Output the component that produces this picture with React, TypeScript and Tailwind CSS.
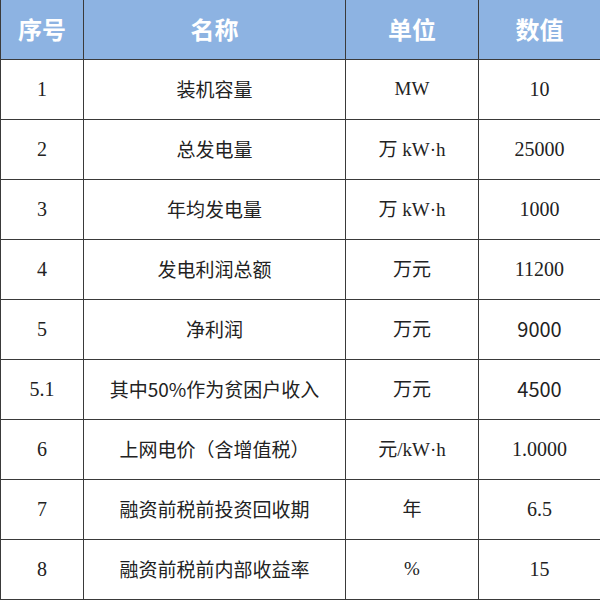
const sans = "font-['Noto_Sans_CJK_SC','Noto_Sans',sans-serif]";
const serif = "font-['Liberation_Serif','Noto_Sans_CJK_SC',serif]";

type Row = {
  no: string;
  name: string;
  unit: React.ReactNode;
  value: string;
  valueSans?: boolean;
};

const rows: Row[] = [
  { no: "1", name: "装机容量", unit: <span className={serif}>MW</span>, value: "10" },
  {
    no: "2",
    name: "总发电量",
    unit: (
      <>
        <span className={sans}>万</span> <span className={serif}>kW·h</span>
      </>
    ),
    value: "25000",
  },
  {
    no: "3",
    name: "年均发电量",
    unit: (
      <>
        <span className={sans}>万</span> <span className={serif}>kW·h</span>
      </>
    ),
    value: "1000",
  },
  { no: "4", name: "发电利润总额", unit: <span className={sans}>万元</span>, value: "11200" },
  { no: "5", name: "净利润", unit: <span className={sans}>万元</span>, value: "9000", valueSans: true },
  {
    no: "5.1",
    name: "其中50%作为贫困户收入",
    unit: <span className={sans}>万元</span>,
    value: "4500",
    valueSans: true,
  },
  {
    no: "6",
    name: "上网电价（含增值税）",
    unit: (
      <>
        <span className={sans}>元</span>
        <span className={serif}>/kW·h</span>
      </>
    ),
    value: "1.0000",
  },
  { no: "7", name: "融资前税前投资回收期", unit: <span className={sans}>年</span>, value: "6.5" },
  { no: "8", name: "融资前税前内部收益率", unit: <span className={serif}>%</span>, value: "15" },
];

export default function App() {
  return (
    <div className="w-[600px] h-[600px] bg-white">
      <table className="w-[600px] table-fixed border-collapse text-[#222]">
        <colgroup>
          <col className="w-[83px]" />
          <col className="w-[262px]" />
          <col className="w-[133px]" />
          <col className="w-[122px]" />
        </colgroup>
        <thead>
          <tr className="h-[59px] bg-[#8db3e2] text-white">
            {["序号", "名称", "单位", "数值"].map((h) => (
              <th
                key={h}
                className={`${sans} border-x border-b border-[#3a3a3a] text-[24px] font-bold text-center align-middle`}
              >
                {h}
              </th>
            ))}
          </tr>
        </thead>
        <tbody>
          {rows.map((r) => (
            <tr key={r.no} className="h-[60px]">
              <td className={`${serif} border border-[#3a3a3a] text-center text-[20px]`}>{r.no}</td>
              <td className={`${sans} border border-[#3a3a3a] text-center text-[19px]`}>{r.name}</td>
              <td className="border border-[#3a3a3a] text-center text-[19px]">{r.unit}</td>
              <td
                className={`${r.valueSans ? sans : serif} border border-[#3a3a3a] text-center text-[20px]`}
              >
                {r.value}
              </td>
            </tr>
          ))}
        </tbody>
      </table>
    </div>
  );
}
